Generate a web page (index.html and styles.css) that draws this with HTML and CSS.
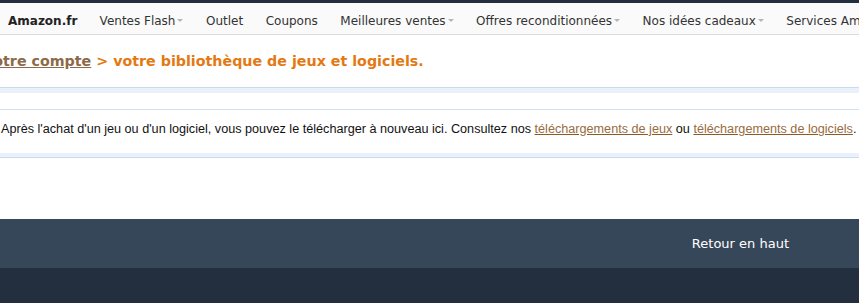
FILE: index.html
```html
<!DOCTYPE html>
<html lang="fr">
<head>
<meta charset="utf-8">
<title>Votre bibliothèque de jeux et logiciels</title>
<link rel="stylesheet" href="styles.css">
</head>
<body>
<div class="topbar"></div>
<nav class="nav">
  <a class="nav-item brand" href="#">Amazon.fr</a>
  <a class="nav-item" href="#">Ventes Flash<span class="caret"></span></a>
  <a class="nav-item" href="#">Outlet</a>
  <a class="nav-item" href="#">Coupons</a>
  <a class="nav-item" href="#">Meilleures ventes<span class="caret"></span></a>
  <a class="nav-item" href="#">Offres reconditionnées<span class="caret"></span></a>
  <a class="nav-item" href="#">Nos idées cadeaux<span class="caret"></span></a>
  <a class="nav-item" href="#">Services Amazon<span class="caret"></span></a>
</nav>
<main class="main">
  <h1 class="title"><a class="crumb" href="#">Votre compte</a> &gt; votre bibliothèque de jeux et logiciels.</h1>
  <div class="panel">
    <div class="panel-head"></div>
    <div class="panel-row">Après l'achat d'un jeu ou d'un logiciel, vous pouvez le télécharger à nouveau ici. Consultez nos <a class="link" href="#">téléchargements de jeux</a> ou <a class="link" href="#">téléchargements de logiciels</a>.</div>
    <div class="panel-foot"></div>
  </div>
</main>
<footer class="footer">
  <div class="back-top"><a class="back-link" href="#">Retour en haut</a></div>
  <div class="footer-bottom"></div>
</footer>
</body>
</html>
```
FILE: styles.css
```css
html, body {
  margin: 0;
  padding: 0;
  background: #fff;
  overflow: hidden;
}
body {
  width: 859px;
  height: 303px;
  font-family: "DejaVu Sans", Verdana, sans-serif;
}
.topbar {
  height: 3px;
  background: #232f3e;
}
.nav {
  display: flex;
  align-items: center;
  box-sizing: border-box;
  height: 32px;
  padding-top: 5px;
  background: #fafafa;
  border-bottom: 1px solid #dddddd;
  white-space: nowrap;
  overflow: hidden;
  font-size: 12px;
}
.nav-item {
  display: flex;
  align-items: center;
  padding: 0 11.25px;
  color: #333;
  text-decoration: none;
  flex: none;
}
.nav-item.brand {
  padding-left: 8px;
  padding-right: 11px;
  font-weight: bold;
  color: #222;
}
.caret {
  display: inline-block;
  margin-left: 2px;
  margin-top: -1px;
  border-left: 3px solid transparent;
  border-right: 3px solid transparent;
  border-top: 3px solid #b5b5b5;
}
.main {
  height: 184px;
}
.title {
  margin: 0 0 0 -17px;
  padding: 16px 0 0;
  height: 36px;
  line-height: 20px;
  font-size: 14.25px;
  font-weight: bold;
  color: #e47911;
  white-space: nowrap;
}
.crumb {
  color: #8d6a47;
  text-decoration: underline;
}
.panel {
  border-top: 1px solid #c9dbf0;
  border-bottom: 1px solid #c9dbf0;
}
.panel-head {
  height: 5px;
  background: #eaf1fb;
  border-bottom: 16px solid #fff;
}
.panel-row {
  border-top: 1px solid #d3e0f0;
  height: 44px;
  box-sizing: border-box;
  padding: 9px 0 0 1px;
  line-height: 20px;
  font-family: "Liberation Sans", Arial, sans-serif;
  font-size: 12.65px;
  color: #111;
  white-space: nowrap;
}
.link {
  color: #9a6b3c;
  text-decoration: underline;
  text-decoration-color: #8a5a2a;
}
.panel-foot {
  height: 4px;
  background: #eaf1fb;
}
.back-top {
  height: 49px;
  background: #37475a;
  display: flex;
  align-items: center;
  justify-content: flex-end;
  padding-right: 70px;
}
.back-link {
  color: #fff;
  text-decoration: none;
  font-size: 13px;
}
.footer-bottom {
  height: 35px;
  background: #232f3e;
}
```
